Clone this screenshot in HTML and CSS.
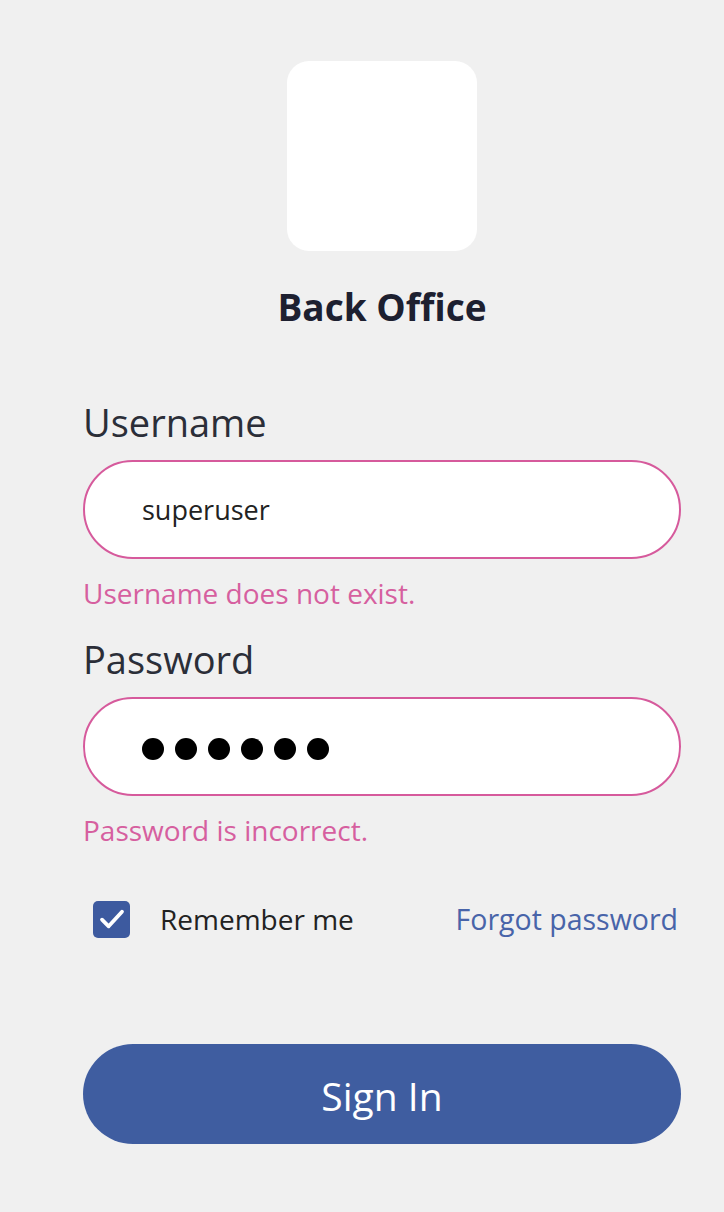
FILE: index.html
```html
<!DOCTYPE html>
<html lang="en">
<head>
<meta charset="utf-8">
<title>Back Office - Sign In</title>
<link rel="stylesheet" href="styles.css">
</head>
<body>
<main class="login">
  <div class="brand">
    <div class="logo"></div>
    <h1 class="title">Back Office</h1>
  </div>
  <form class="form">
    <div class="group">
      <label class="label">Username</label>
      <div class="field field-error"><span class="value">superuser</span></div>
      <p class="error">Username does not exist.</p>
    </div>
    <div class="group">
      <label class="label">Password</label>
      <div class="field field-error">
        <span class="dots"><span class="dot"></span><span class="dot"></span><span class="dot"></span><span class="dot"></span><span class="dot"></span><span class="dot"></span></span>
      </div>
      <p class="error">Password is incorrect.</p>
    </div>
    <div class="options">
      <label class="remember">
        <span class="checkbox">
          <svg viewBox="0 0 24 24" width="32" height="32"><path d="M4.5 12.5l5 5L19.5 6.5" fill="none" stroke="#fff" stroke-width="2.8" stroke-linecap="round" stroke-linejoin="round"/></svg>
        </span>
        <span class="remember-text">Remember me</span>
      </label>
      <a class="forgot" href="#">Forgot password</a>
    </div>
    <button type="button" class="signin">Sign In</button>
  </form>
</main>
</body>
</html>
```
FILE: styles.css
```css
html, body {
  margin: 0;
  padding: 0;
  background: #f0f0f0;
}
body {
  font-family: "Open Sans", "Noto Sans", sans-serif;
  color: #2a2d36;
}
.login {
  width: 598px;
  margin-left: 83px;
  padding-top: 61px;
}
.brand {
  display: flex;
  flex-direction: column;
  align-items: center;
}
.logo {
  width: 190px;
  height: 190px;
  background: #fff;
  border-radius: 22px;
}
.title {
  margin: 34px 0 0;
  font-size: 37px;
  font-weight: 700;
  line-height: 44px;
  color: #1d2030;
}
.form {
  margin-top: 69px;
  display: flex;
  flex-direction: column;
}
.group {
  display: flex;
  flex-direction: column;
}
.label {
  font-size: 38px;
  line-height: 48px;
  color: #2b2e38;
  margin-bottom: 14px;
}
.field {
  box-sizing: border-box;
  height: 99px;
  border: 2px solid #d65a9c;
  border-radius: 50px;
  background: #fff;
  display: flex;
  align-items: center;
  padding-left: 57px;
}
.value {
  font-size: 27px;
  color: #222;
}
.dots {
  display: flex;
  gap: 11px;
  padding-top: 4px;
}
.dot {
  width: 22px;
  height: 22px;
  border-radius: 50%;
  background: #000;
}
.error {
  margin: 16px 0 0;
  font-size: 28px;
  line-height: 36px;
  color: #d65f9f;
}
.group + .group {
  margin-top: 24px;
}
.options {
  margin-top: 52px;
  display: flex;
  align-items: center;
  justify-content: space-between;
}
.remember {
  display: flex;
  align-items: center;
  gap: 30px;
  padding-left: 10px;
}
.checkbox {
  width: 37px;
  height: 37px;
  border-radius: 5px;
  background: #3d5a9f;
  display: flex;
  align-items: center;
  justify-content: center;
}
.remember-text {
  font-size: 28px;
  color: #222;
}
.forgot {
  font-size: 28.5px;
  color: #4864a9;
  text-decoration: none;
  padding-right: 3px;
}
.signin {
  margin-top: 106px;
  height: 100px;
  border: 0;
  border-radius: 50px;
  background: #3f5da0;
  color: #fff;
  font-family: "Open Sans", "Noto Sans", sans-serif;
  font-size: 39px;
  padding-top: 4px;
}
```
